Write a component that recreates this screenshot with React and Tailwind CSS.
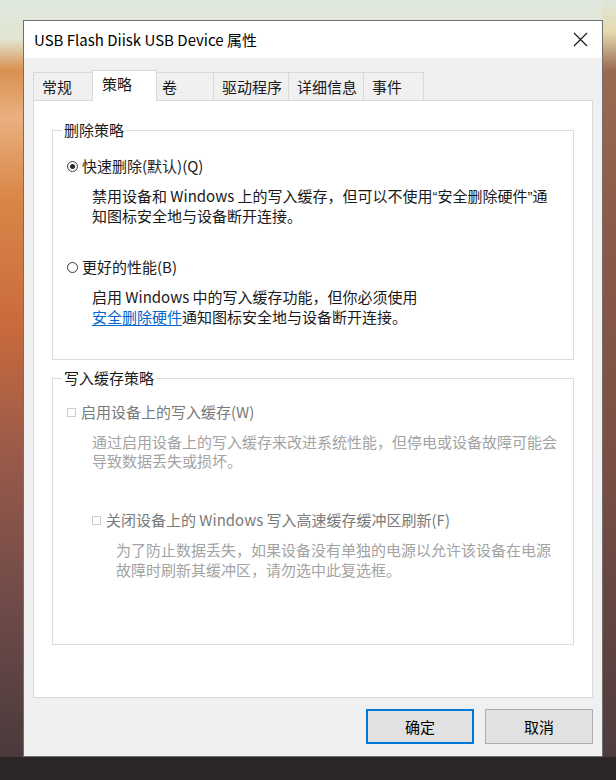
const font = "font-['Noto_Sans_CJK_SC','Noto_Sans',sans-serif]"

const tabs = [
  { label: '常规', w: 'w-[60px]', pl: 'pl-[8px]' },
  { label: '策略', w: 'w-[65px]', pl: 'pl-[9px]', active: true },
  { label: '卷', w: 'w-[58px]', pl: 'pl-[5px]' },
  { label: '驱动程序', w: 'w-[76px]', pl: 'pl-[8px]' },
  { label: '详细信息', w: 'w-[76px]', pl: 'pl-[8px]' },
  { label: '事件', w: 'w-[61px]', pl: 'pl-[8px]' },
]

const Radio = ({ checked }) => (
  <span className="w-[11px] h-[11px] rounded-full border border-[#3c3c3c] flex items-center justify-center shrink-0">
    {checked && <span className="w-[5px] h-[5px] rounded-full bg-[#2a2a2a]" />}
  </span>
)

const Check = () => <span className="w-[9px] h-[9px] border border-[#cccccc] bg-white shrink-0" />

// narrow latin quotes, like the reference
const Q = ({ children }) => <span className="font-['Liberation_Sans',sans-serif]">{children}</span>

const GroupBox = ({ title, className, children }) => (
  <div className={`relative border border-[#dcdcdc] ${className}`}>
    <span className="absolute -top-[11px] left-[9px] px-[2px] bg-white leading-[20px] text-[#1a1a1a]">{title}</span>
    {children}
  </div>
)

export default function App() {
  return (
    <div
      className={`${font} w-[616px] h-[780px] overflow-hidden text-[15px] bg-no-repeat [background-image:linear-gradient(180deg,#dfe6da_0%,#e6dcb0_4%,#9a6a50_9%,#8a5a48_30%,#7a4e44_60%,#4e3c3e_97%),linear-gradient(180deg,#dfe8df_0%,#e2e6d2_5%,#d99050_9%,#eab080_15%,#d98848_25%,#c86a3c_42%,#9a5a4a_58%,#6e4a48_78%,#4a3a3c_97%)] [background-size:14px_100%,100%_100%] [background-position:right_top,left_top]`}
    >
      <div className="h-[757px] pt-[20px] pl-[23px]">
        <div className="w-[580px] h-[737px] border border-[#6f6f6f] bg-[#f0f0f0] flex flex-col">
          {/* title bar */}
          <div className="h-[37px] bg-white flex items-center justify-between pl-[10px] pr-[14px] shrink-0">
            <span className="text-[15px] text-black leading-[20px]">USB Flash Diisk USB Device 属性</span>
            <svg width="15" height="15" viewBox="0 0 15 15" className="text-[#111]">
              <path d="M1 1L14 14M14 1L1 14" stroke="currentColor" strokeWidth="1.1" fill="none" />
            </svg>
          </div>

          {/* body */}
          <div className="flex-1 px-[9px] pt-[12px]">
            <div className="flex items-end h-[30px]">
              {tabs.map((t, i) => (
                <div
                  key={t.label}
                  className={`${t.w} ${t.pl} ${i > 0 ? '-ml-px' : ''} border border-[#d9d9d9] border-b-0 text-[#1a1a1a] ${
                    t.active
                      ? 'h-[31px] -mb-px bg-white relative z-10 pt-[3px] leading-[20px]'
                      : 'h-[28px] bg-[#f0f0f0] pt-[4px] leading-[20px]'
                  }`}
                >
                  {t.label}
                </div>
              ))}
            </div>

            <div className="h-[598px] bg-white border border-[#d9d9d9] pt-[29px] px-[18px]">
              <GroupBox title="删除策略" className="h-[230px] pt-[25px] pl-[14px]">
                <div className="flex items-center gap-[4px] h-[20px] text-[#1a1a1a]">
                  <Radio checked />
                  <span>快速删除(默认)(Q)</span>
                </div>
                <div className="ml-[25px] mt-[10px] leading-[19px] text-[#1a1a1a] whitespace-nowrap">
                  禁用设备和 Windows 上的写入缓存，但可以不使用<Q>“</Q>安全删除硬件<Q>”</Q>通
                  <br />
                  知图标安全地与设备断开连接。
                </div>
                <div className="flex items-center gap-[4px] h-[20px] mt-[32px] text-[#1a1a1a]">
                  <Radio />
                  <span>更好的性能(B)</span>
                </div>
                <div className="ml-[25px] mt-[10px] leading-[20px] text-[#1a1a1a] whitespace-nowrap">
                  启用 Windows 中的写入缓存功能，但你必须使用
                  <br />
                  <span className="text-[#0066cc] underline underline-offset-2">安全删除硬件</span>通知图标安全地与设备断开连接。
                </div>
              </GroupBox>

              <GroupBox title="写入缓存策略" className="h-[267px] mt-[18px] pt-[23px] pl-[14px]">
                <div className="flex items-center gap-[5px] h-[20px] text-[#7a7a7a]">
                  <Check />
                  <span>启用设备上的写入缓存(W)</span>
                </div>
                <div className="ml-[25px] mt-[10px] leading-[19px] text-[#a3a3a3] whitespace-nowrap">
                  通过启用设备上的写入缓存来改进系统性能，但停电或设备故障可能会
                  <br />
                  导致数据丢失或损坏。
                </div>
                <div className="ml-[25px] mt-[40px] flex items-center gap-[5px] h-[20px] text-[#7a7a7a]">
                  <Check />
                  <span>关闭设备上的 Windows 写入高速缓存缓冲区刷新(F)</span>
                </div>
                <div className="ml-[49px] mt-[10px] leading-[20px] text-[#a3a3a3] whitespace-nowrap">
                  为了防止数据丢失，如果设备没有单独的电源以允许该设备在电源
                  <br />
                  故障时刷新其缓冲区，请勿选中此复选框。
                </div>
              </GroupBox>
            </div>

            <div className="flex justify-end gap-[11px] mt-[11px]">
              <button className="w-[108px] h-[35px] bg-[#e1e1e1] border-2 border-[#0078d7] text-black leading-[20px]">
                确定
              </button>
              <button className="w-[108px] h-[35px] bg-[#e1e1e1] border border-[#adadad] text-black leading-[20px]">
                取消
              </button>
            </div>
          </div>
        </div>
      </div>
      <div className="h-[23px] bg-[#2b2628]" />
    </div>
  )
}
